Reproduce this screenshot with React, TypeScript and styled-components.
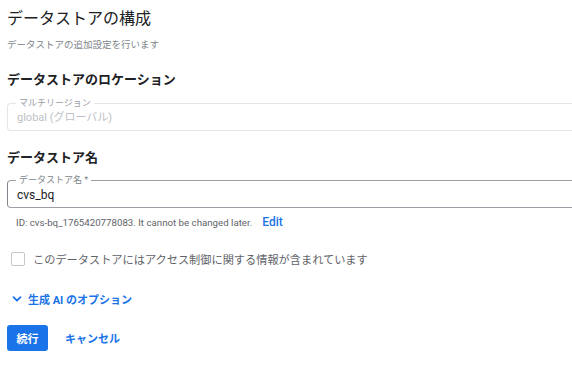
import { ReactElement } from 'react'
import styled, { createGlobalStyle } from 'styled-components'

const GlobalStyle = createGlobalStyle`
    html, body {
        margin: 0;
        padding: 0;
        overflow: hidden;
        background: #ffffff;
    }
    body {
        font-family: Roboto, 'Noto Sans CJK JP', 'Noto Sans', sans-serif;
        color: #202124;
    }
`

const Page = styled.div`
    padding: 9px 0 0 7px;
    display: flex;
    flex-direction: column;
`

const Title = styled.h1`
    margin: 0;
    font-size: 16px;
    line-height: 20px;
    font-weight: 400;
    color: #202124;
`

const Subtitle = styled.p`
    margin: 9px 0 0;
    font-size: 9.5px;
    line-height: 14px;
    color: #80868b;
`

const SectionTitle = styled.h2<{ $top: number }>`
    margin: ${(p) => p.$top}px 0 0;
    font-size: 13px;
    line-height: 18px;
    font-weight: 700;
    color: #202124;
`

const Field = styled.div<{ $disabled?: boolean; $top: number }>`
    position: relative;
    margin-top: ${(p) => p.$top}px;
    height: 28px;
    box-sizing: border-box;
    border: 1px solid ${(p) => (p.$disabled ? '#e6e6e6' : '#9aa0a6')};
    border-left-color: ${(p) => (p.$disabled ? '#e6e6e6' : '#80868b')};
    border-right: none;
    border-radius: 4px 0 0 4px;
    display: flex;
    align-items: center;
    padding: 2px 0 0 9px;
`

const FieldLabel = styled.span<{ $disabled?: boolean }>`
    position: absolute;
    left: 8px;
    top: -6px;
    padding: 0 3px;
    background: #ffffff;
    font-size: 9px;
    line-height: 10px;
    color: ${(p) => (p.$disabled ? '#9aa0a6' : '#80868b')};
`

const FieldValue = styled.span<{ $disabled?: boolean }>`
    font-size: ${(p) => (p.$disabled ? 11 : 12)}px;
    line-height: 14px;
    color: ${(p) => (p.$disabled ? '#bdc1c6' : '#202124')};
`

const Helper = styled.div`
    margin: 7px 0 0 9px;
    display: flex;
    align-items: baseline;
    gap: 10px;
    font-size: 9.7px;
    line-height: 14px;
    color: #5f6368;
`

const LinkText = styled.span<{ $size?: number; $weight?: number }>`
    font-size: ${(p) => p.$size ?? 11}px;
    font-weight: ${(p) => p.$weight ?? 700};
    color: #1a73e8;
    cursor: pointer;
`

const CheckRow = styled.label`
    margin: 21px 0 0 4px;
    display: flex;
    align-items: center;
    gap: 8px;
    height: 16px;
    font-size: 11.2px;
    color: #5f6368;
`

const Box = styled.span`
    width: 14px;
    height: 14px;
    box-sizing: border-box;
    border: 1.5px solid #c4c7c9;
    border-radius: 2px;
`

const Toggle = styled.div`
    margin: 24px 0 0 5px;
    height: 16px;
    display: flex;
    align-items: center;
    gap: 6px;
    font-size: 11px;
    font-weight: 700;
    color: #1a73e8;
    cursor: pointer;
`

const Actions = styled.div`
    margin-top: 18px;
    display: flex;
    align-items: center;
    gap: 17px;
`

const PrimaryButton = styled.button`
    height: 26px;
    width: 41px;
    border: none;
    border-radius: 3px;
    background: #1a73e8;
    color: #ffffff;
    font-family: inherit;
    font-size: 11px;
    font-weight: 700;
    cursor: pointer;
`

function Chevron(): ReactElement {
    return (
        <svg width='10' height='10' viewBox='0 0 10 10' fill='none'>
            <path
                d='M1.5 3.2 L5 6.7 L8.5 3.2'
                stroke='#1a73e8'
                strokeWidth='1.8'
                strokeLinecap='round'
                strokeLinejoin='round'
            />
        </svg>
    )
}

function App(): ReactElement {
    return (
        <>
            <GlobalStyle />
            <Page>
                <Title>データストアの構成</Title>
                <Subtitle>データストアの追加設定を行います</Subtitle>

                <SectionTitle $top={19}>データストアのロケーション</SectionTitle>
                <Field $disabled $top={14}>
                    <FieldLabel $disabled>マルチリージョン</FieldLabel>
                    <FieldValue $disabled>global (グローバル)</FieldValue>
                </Field>

                <SectionTitle $top={18}>データストア名</SectionTitle>
                <Field $top={13}>
                    <FieldLabel>データストア名 *</FieldLabel>
                    <FieldValue>cvs_bq</FieldValue>
                </Field>
                <Helper>
                    <span>ID: cvs-bq_1765420778083. It cannot be changed later.</span>
                    <LinkText $size={12} $weight={500}>Edit</LinkText>
                </Helper>

                <CheckRow>
                    <Box />
                    <span>このデータストアにはアクセス制御に関する情報が含まれています</span>
                </CheckRow>

                <Toggle>
                    <Chevron />
                    <span>生成 AI のオプション</span>
                </Toggle>

                <Actions>
                    <PrimaryButton>続行</PrimaryButton>
                    <LinkText>キャンセル</LinkText>
                </Actions>
            </Page>
        </>
    )
}

export default App
